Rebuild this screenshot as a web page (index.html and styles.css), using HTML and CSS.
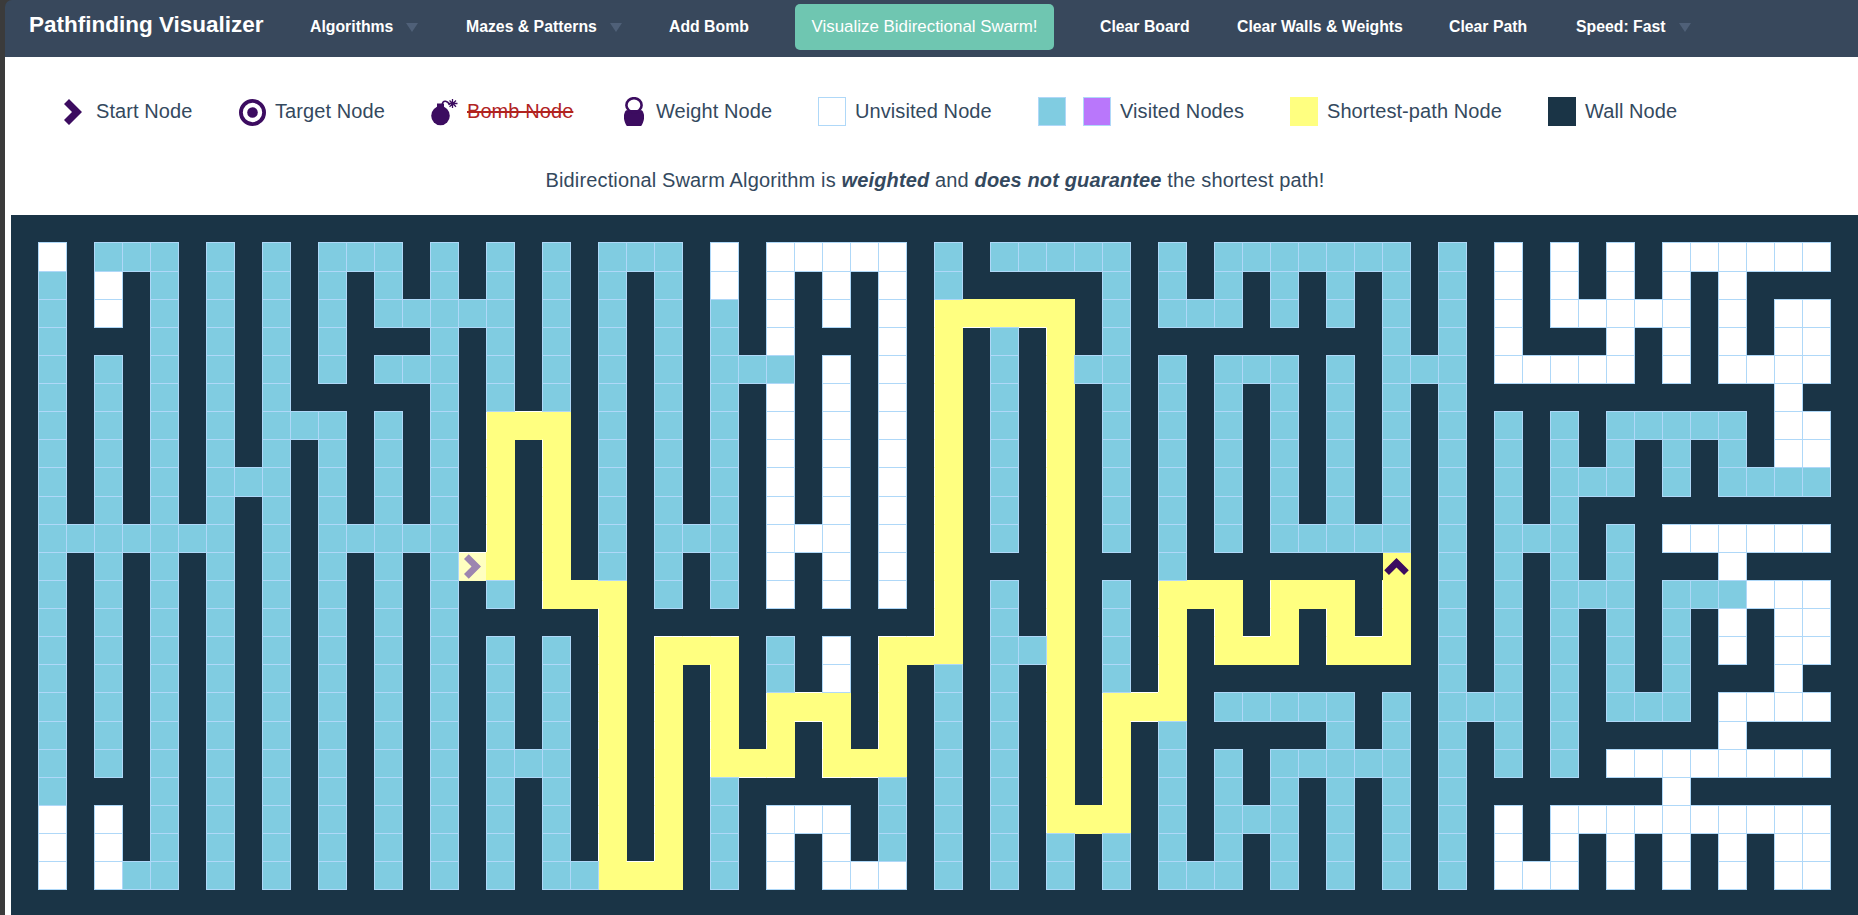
FILE: index.html
```html
<!DOCTYPE html>
<html lang="en">
<head>
<meta charset="utf-8">
<title>Pathfinding Visualizer</title>
<link rel="stylesheet" href="styles.css">
</head>
<body>
<div class="page">
  <nav class="navbar">
    <a class="brand">Pathfinding Visualizer</a>
    <a class="item">Algorithms<span class="caret"></span></a>
    <a class="item">Mazes &amp; Patterns<span class="caret"></span></a>
    <a class="item">Add Bomb</a>
    <button class="start-button">Visualize Bidirectional Swarm!</button>
    <a class="item">Clear Board</a>
    <a class="item">Clear Walls &amp; Weights</a>
    <a class="item">Clear Path</a>
    <a class="item">Speed: Fast<span class="caret"></span></a>
  </nav>
  <ul class="legend">
    <li class="entry">
      <svg class="icon icon-start" width="18" height="26" viewBox="0 0 18 26"><path d="M5 0L18 13L5 26L0 21L8 13L0 5Z"/></svg>
      <span>Start Node</span>
    </li>
    <li class="entry">
      <svg class="icon icon-target" width="27" height="27" viewBox="0 0 27 27"><circle cx="13.5" cy="13.5" r="11.6" fill="none" stroke="#3c0c60" stroke-width="3.8"/><circle cx="13.5" cy="13.5" r="5.3"/></svg>
      <span>Target Node</span>
    </li>
    <li class="entry">
      <svg class="icon icon-bomb" width="27" height="27" viewBox="0 0 27 27"><ellipse cx="9.5" cy="16.7" rx="9.3" ry="9.6"/><path d="M6 4.5H13V9H6Z"/><path d="M11 6C12 0 17 2 18.5 6" fill="none" stroke="#3c0c60" stroke-width="1.5"/><path d="M21.5 0V9M17.5 4.5H26.5M18.5 1.5L25 7.8M25 1.5L18.5 7.8" stroke="#3c0c60" stroke-width="1.3"/></svg>
      <span class="disabled">Bomb Node</span>
    </li>
    <li class="entry">
      <svg class="icon icon-weight" width="20" height="29" viewBox="0 0 20 29"><path d="M2.2 13.2C-2 18 .2 25 2.8 29H17.2C19.8 25 22 18 17.8 13.2Z"/><ellipse cx="10" cy="8.2" rx="7.6" ry="7" fill="none" stroke="#3c0c60" stroke-width="2.6"/><path d="M3.9 13H16.1V15H3.9Z"/></svg>
      <span>Weight Node</span>
    </li>
    <li class="entry"><span class="swatch"></span><span>Unvisited Node</span></li>
    <li class="entry"><span class="swatch visited"></span><span class="swatch visited-alt"></span><span>Visited Nodes</span></li>
    <li class="entry"><span class="swatch path"></span><span>Shortest-path Node</span></li>
    <li class="entry"><span class="swatch wall"></span><span>Wall Node</span></li>
  </ul>
  <p class="description">Bidirectional Swarm Algorithm is <b><i>weighted</i></b> and <b><i>does not guarantee</i></b> the shortest path!</p>
  <main class="board" id="board"></main>
</div>
<script src="board.js"></script>
</body>
</html>
```
FILE: styles.css
```css
* { box-sizing: border-box; }

body {
  margin: 0;
  height: 915px;
  overflow: hidden;
  background: #fff;
  font-family: "Liberation Sans", Arial, sans-serif;
  color: #34495e;
}

.page {
  height: 915px;
  border-left: 5px solid #3b3b3b;
  background: linear-gradient(#3b3b3b, #3b3b3b) 0 0 / 8px 8px no-repeat #fff;
  display: flex;
  flex-direction: column;
}

.navbar {
  flex: none;
  height: 57px;
  padding-left: 23px;
  border-top-left-radius: 7px;
  background: #38485c;
  color: #fff;
  display: grid;
  grid-template-columns: 282px 156px 203px 126px 305px 137px 212px 127px auto;
}

.brand, .item {
  white-space: nowrap;
  line-height: 53px;
}

.brand {
  padding-left: 1px;
  font-size: 22.5px;
  font-weight: bold;
  line-height: 50px;
}

.item {
  font-size: 15.8px;
  font-weight: bold;
}

.caret {
  display: inline-block;
  margin-left: 13px;
  border: 6px solid transparent;
  border-top: 9px solid #4f6078;
  border-bottom: 0;
}

.start-button {
  justify-self: start;
  width: 259px;
  height: 46px;
  margin-top: 4px;
  padding: 0 0 1px;
  border: 0;
  border-radius: 5px;
  background: #6fc6b1;
  color: #fff;
  font: 16.9px "Liberation Sans", Arial, sans-serif;
  white-space: nowrap;
}

.legend {
  flex: none;
  list-style: none;
  margin: 40px 0 0;
  padding: 0 0 0 59px;
  height: 29px;
  display: grid;
  grid-template-columns: 175px 192px 193px 194px 220px 252px 258px auto;
  font-size: 20px;
  letter-spacing: .08px;
  line-height: 28px;
}

.entry {
  display: flex;
  white-space: nowrap;
}

.icon {
  fill: #3c0c60;
  flex: none;
}

.icon-start { margin: 2px 14px 0 0; }
.icon-target { margin: 2px 9px 0 0; }
.icon-bomb { margin: 2px 9px 0 0; }
.icon-weight { margin: 0 12px 0 0; }

.disabled {
  color: #b1231f;
  text-decoration: line-through;
}

.swatch {
  flex: none;
  width: 28px;
  height: 29px;
  margin-right: 9px;
  border: 1px solid #afd8f8;
}

.visited { background: #80cce1; margin-right: 17px; }
.visited-alt { background: #b977fb; }
.path { background: #ffff80; border-color: #ffff80; }
.wall { background: #1a3446; border-color: #1a3446; }

.description {
  flex: none;
  margin: 42px 0 0;
  padding-left: 7px;
  height: 47px;
  text-align: center;
  font-size: 20px;
  letter-spacing: .145px;
  line-height: 24px;
}

.board {
  flex: none;
  height: 700px;
  margin-left: 6px;
  overflow: hidden;
  background: #1a3446;
  display: grid;
  grid-template-columns: 27px repeat(65, 28px);
  grid-template-rows: 27px 29px repeat(7, 28px) 29px repeat(7, 28px) 29px repeat(7, 28px);
}

.cell {
  display: flex;
  align-items: center;
  justify-content: center;
  margin: 0 -1px -1px 0;
  border: 1px solid #afd8f8;
}

.cell-unvisited { background: #fff; z-index: 1; }
.cell-visited { background: #80cce1; z-index: 1; }
.cell-path { background: #ffff80; border-color: #ffff80; }
.cell-start { background: #ffffc0; border-color: #ffffc0; }
.cell-target { background: #ffff80; border-color: #ffff80; border-left-color: #1a3446; }

.edge-left { border-left-color: #fff; }
.edge-top { border-top-color: #fff; }
.edge-bottom { border-bottom-color: #fff; }

.arrow { flex: none; fill: #3c0c60; }
.cell-start .arrow { fill: #9d85b0; }
```
FILE: board.js
```js
// Column index -> runs of rows: U unvisited, V visited, P shortest path, S start, T target.
const columns = {
  1: "U1 V2-20 U21-23", 2: "V11", 3: "V1 U2-3 V5-19 U21-23", 4: "V1 V11 V23",
  5: "V1-23", 6: "V11", 7: "V1-23", 8: "V9", 9: "V1-23", 10: "V7",
  11: "V1-5 V7-23", 12: "V1 V11", 13: "V1-3 V5 V7-23", 14: "V3 V5 V11",
  15: "V1-23", 16: "V3 S12", 17: "V1-6 P7-12 V13 V15-23", 18: "P7 V19",
  19: "V1-6 P7-13 V15-23", 20: "P13 V23", 21: "V1-12 P13-23", 22: "V1 P23",
  23: "V1-13 P15-23", 24: "V11 P15", 25: "U1-2 V3-13 P15-19 V20-23", 26: "V5 P19",
  27: "U1-4 V5 U6-13 V15-16 P17-19 U21-23", 28: "U1 U11 P17 U21",
  29: "U1-3 U5-13 U15-16 P17-19 U21-23", 30: "U1 P19 U23",
  31: "U1-13 P15-19 V20-22 U23", 32: "P15", 33: "V1-2 P3-15 V16-23", 34: "P3",
  35: "V1 P3 V4-11 V13-23", 36: "V1 P3 V15", 37: "V1 P3-21 V22-23", 38: "V1 V5 P21",
  39: "V1-11 V13-16 P17-21 V22-23", 40: "P17", 41: "V1-3 V5-12 P13-17 V18-23",
  42: "V3 P13 V23", 43: "V1-3 V5-11 P13-15 V17 V19-23", 44: "V1 V5 P15 V17 V21",
  45: "V1-3 V5-11 P13-15 V17 V19-23", 46: "V1 V11 P13 V17 V19",
  47: "V1-3 V5-11 P13-15 V17-23", 48: "V1 V11 P15 V19", 49: "V1-11 T12 P13-15 V17-23",
  50: "V5", 51: "V1-23", 52: "V17", 53: "U1-5 V7-19 U21-23", 54: "U5 V11 U23",
  55: "U1-3 U5 V7-19 U21-23", 56: "U3 U5 V9 V13 U21",
  57: "U1-5 V7-9 V11-17 U19 U21-23", 58: "U3 V7 V17 U19 U21",
  59: "U1-5 V7-9 U11 V13-17 U19-23", 60: "U1 V7 U11 V13 U19 U21",
  61: "U1-5 V7-9 U11-12 V13 U14-15 U17-19 U21-23",
  62: "U1 U5 V9 U11 U13 U17 U19 U21",
  63: "U1 U3-8 V9 U11 U13-17 U19 U21-23",
  64: "U1 U3-5 U7-8 V9 U11 U13-15 U17 U19 U21-23"
};

const names = { U: "unvisited", V: "visited", P: "path", S: "start", T: "target" };
const arrows = {
  S: '<svg class="arrow" width="17" height="25" viewBox="0 0 18 26"><path d="M5 0L18 13L5 26L0 21L8 13L0 5Z"/></svg>',
  T: '<svg class="arrow" width="25" height="17" viewBox="0 0 26 18"><path d="M0 13L13 0L26 13L21 18L13 10L5 18Z"/></svg>'
};

// Row lines where the path keeps a light edge against a wall.
const lightTop = [7, 12, 15, 17, 23];
const lightBottom = [3, 17, 19];

const grid = {};
for (const [col, runs] of Object.entries(columns)) {
  for (const run of runs.split(" ")) {
    const [first, last = first] = run.slice(1).split("-").map(Number);
    for (let row = first; row <= last; row++) grid[col + "," + row] = run[0];
  }
}

const board = document.getElementById("board");
for (const [key, kind] of Object.entries(grid)) {
  const [col, row] = key.split(",").map(Number);
  const open = (dc, dr) => grid[(col + dc) + "," + (row + dr)];
  const cell = document.createElement("div");
  cell.className = "cell cell-" + names[kind];
  if (kind === "P" && !open(-1, 0)) cell.classList.add("edge-left");
  if ("PS".includes(kind) && !open(0, -1) && lightTop.includes(row)) cell.classList.add("edge-top");
  if (kind === "P" && !open(0, 1) && lightBottom.includes(row)) cell.classList.add("edge-bottom");
  cell.style.gridColumn = col + 1;
  cell.style.gridRow = row + 1;
  cell.innerHTML = arrows[kind] || "";
  board.append(cell);
}
```
